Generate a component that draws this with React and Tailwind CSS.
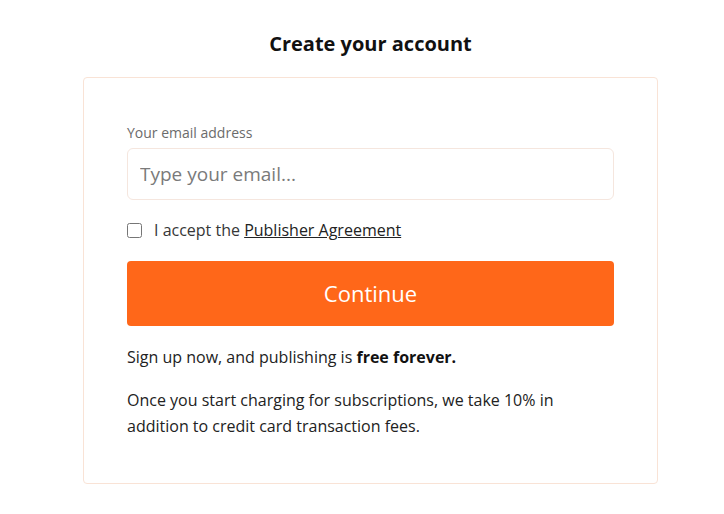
export default function App() {
  return (
    <div className="min-h-screen bg-white font-['Open_Sans',sans-serif] text-[#1a1a1a]">
      <div className="ml-[83px] w-[575px] pt-[30px]">
        <h1 className="text-center text-[20px] font-bold leading-[28px] text-[#111]">Create your account</h1>

        <div className="mt-[19px] rounded-[4px] border border-[#f9e3d6] px-[43px] pt-[45px] pb-[44px]">
          <label className="block text-[14px] leading-[20px] text-[#6b6b6b]">Your email address</label>
          <input
            type="email"
            placeholder="Type your email..."
            className="mt-[5px] block h-[52px] w-full rounded-[6px] border border-[#f5e6de] px-[12px] text-[19px] text-[#222] placeholder:text-[#7a7a7a] outline-none"
          />

          <div className="mt-[19px] flex items-center gap-[12px]">
            <input type="checkbox" className="h-[15px] w-[15px]" />
            <span className="text-[16px] leading-[22px] text-[#363737]">
              I accept the <a href="#" className="underline text-[#222]">Publisher Agreement</a>
            </span>
          </div>

          <button className="mt-[20px] block h-[65px] w-full rounded-[4px] bg-[#ff6719] text-[22px] text-white">
            Continue
          </button>

          <p className="mt-[19px] text-[16px] leading-[24px] text-[#222]">
            Sign up now, and publishing is <b className="font-bold text-[#111]">free forever.</b>
          </p>
          <p className="mt-[18px] text-[16px] leading-[26px] text-[#222]">
            Once you start charging for subscriptions, we take 10% in addition to credit card transaction fees.
          </p>
        </div>
      </div>
    </div>
  );
}
